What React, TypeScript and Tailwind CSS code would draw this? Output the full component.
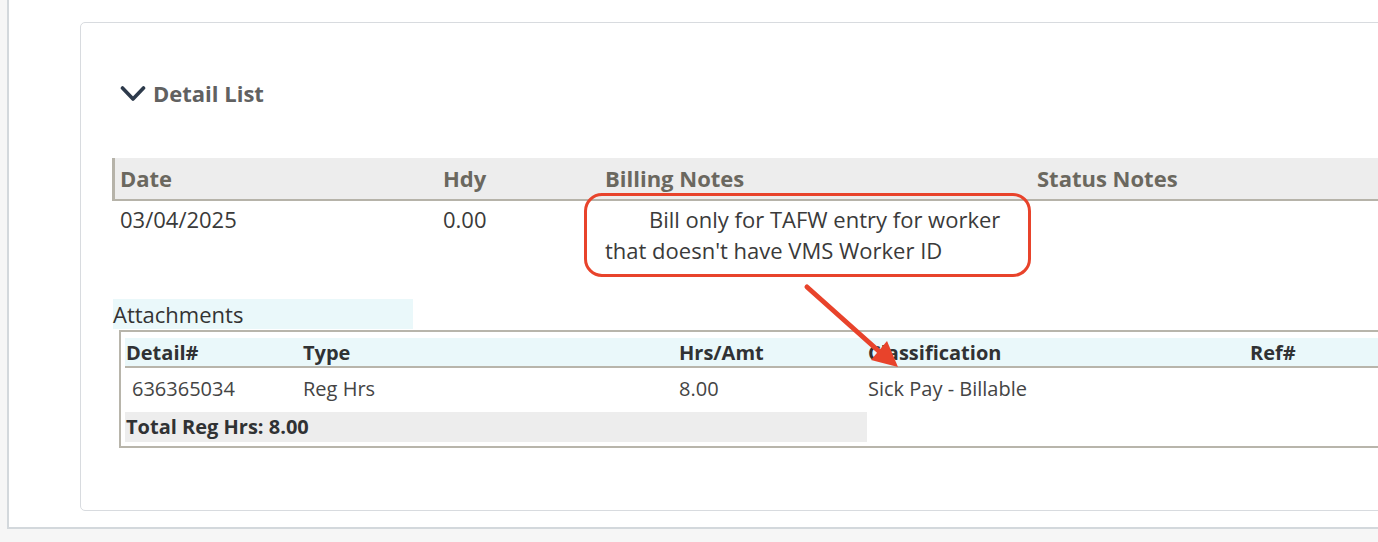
import React from "react";

const mainCols = "grid grid-cols-[323px_162px_432px_1fr]";
const attCols = "grid grid-cols-[177px_376px_189px_382px_1fr]";

function Chevron() {
  return (
    <svg width="26" height="17" viewBox="0 0 26 17" className="shrink-0">
      <path d="M2.5 3 L13 14 L23.5 3" fill="none" stroke="#2d3a4b" strokeWidth="3.6" strokeLinecap="round" strokeLinejoin="round" />
    </svg>
  );
}

export default function App() {
  return (
    <div className="relative min-h-[542px] overflow-hidden bg-[#f6f6f6] font-['Open_Sans','Liberation_Sans',sans-serif]">
      <div className="ml-[7px] h-[529px] border-l-2 border-b-2 border-[#d3d8dc] bg-white pl-[71px] pt-[22px]">
        <div className="h-[489px] w-[1400px] rounded-[5px] border border-[#d8dbdf] bg-white">
          {/* Detail List heading */}
          <div className="mt-[55px] ml-[39px] flex items-center gap-[7px]">
            <Chevron />
            <span className="text-[22px] leading-[30px] font-bold text-[#616161]">Detail List</span>
          </div>

          <div className="ml-[31px] mt-[50px]">
            {/* main table header */}
            <div className={`${mainCols} h-[43px] items-center border-l-[3px] border-b-2 border-[#b6b3a9] bg-[#ededed] text-[22px] font-bold text-[#6b685f]`}>
              <div className="pl-[5px]">Date</div>
              <div className="pl-[5px]">Hdy</div>
              <div className="pl-[5px]">Billing Notes</div>
              <div className="pl-[5px]">Status Notes</div>
            </div>
            {/* main table row */}
            <div className={`${mainCols} pl-[3px] pt-[3px] text-[22px] leading-[31px] text-[#3a3a3a]`}>
              <div className="pl-[5px]">03/04/2025</div>
              <div className="pl-[5px]">0.00</div>
              <div className="pl-[5px] indent-[44px]">
                Bill only for TAFW entry for worker
                <br />
                that doesn't have VMS Worker ID
              </div>
              <div className="pl-[5px]"></div>
            </div>

            {/* Attachments */}
            <div className="mt-[33px] ml-px h-[30px] w-[300px] bg-[#eaf8fa] text-[22px] leading-[30px] text-[#333]">
              Attachments
            </div>
            <div className="mt-px ml-[7px] border-2 border-[#b8b5ab] pt-[6px] pl-[4px] pb-[4px]">
              <div className={`${attCols} h-[30px] items-center border-b-2 border-[#b8b5ab] bg-[#eaf8fa] text-[20px] font-bold text-[#303234]`}>
                <div className="pl-px">Detail#</div>
                <div className="pl-px">Type</div>
                <div className="pl-px">Hrs/Amt</div>
                <div className="pl-px">Classification</div>
                <div className="pl-px">Ref#</div>
              </div>
              <div className={`${attCols} h-[44px] pt-[6px] text-[20px] leading-[30px] text-[#444]`}>
                <div className="pl-[7px]">636365034</div>
                <div className="pl-px">Reg Hrs</div>
                <div className="pl-px">8.00</div>
                <div className="pl-px">Sick Pay - Billable</div>
                <div className="pl-px"></div>
              </div>
              <div className="h-[30px] w-[742px] bg-[#ededed] pl-px text-[20px] leading-[30px] font-bold text-[#303234]">
                Total Reg Hrs: 8.00
              </div>
            </div>
          </div>
        </div>
      </div>

      {/* annotation overlay */}
      <div className="pointer-events-none absolute left-[584px] top-[193px] h-[84px] w-[447px] rounded-[18px] border-[3.5px] border-[#e8432b]" />
      <svg className="pointer-events-none absolute left-0 top-0" width="1378" height="542">
        <line x1="807" y1="287" x2="882" y2="354" stroke="#e8432b" strokeWidth="5" strokeLinecap="round" />
        <polygon points="898,367 871,360 887,341" fill="#e8432b" />
      </svg>
    </div>
  );
}
